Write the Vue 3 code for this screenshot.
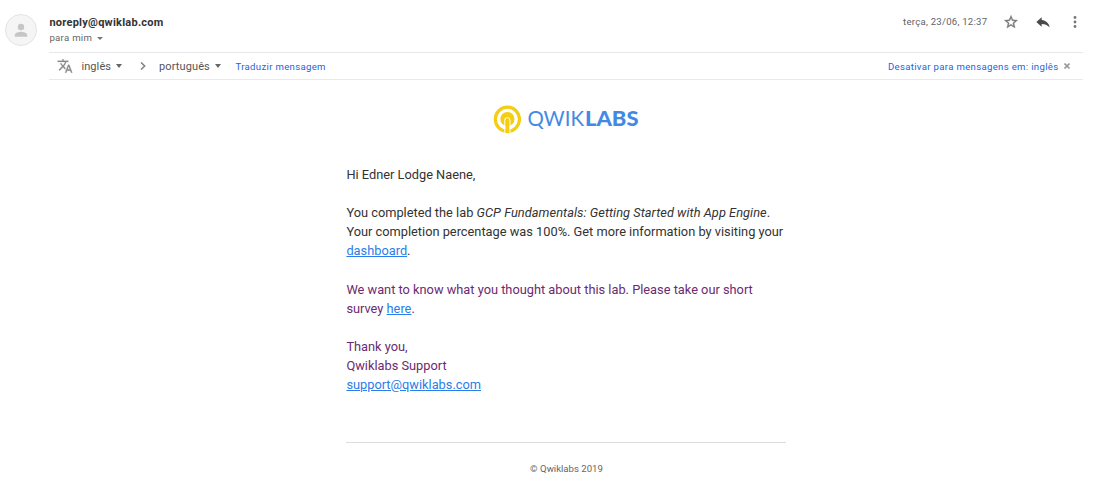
<script setup>
const sender = 'noreply@qwiklab.com'
</script>

<template>
  <main class="mail">
    <header class="head">
      <div class="avatar">
        <svg width="32" height="32" viewBox="0 0 32 32">
          <circle cx="16" cy="16" r="15.5" fill="#f5f5f5" stroke="#e3e3e3" />
          <circle cx="16" cy="13" r="3.2" fill="#c6c6c6" />
          <path d="M9.8 22.7v-1.6c0-2.2 4.1-3.3 6.2-3.3s6.2 1.1 6.2 3.3v1.6z" fill="#c6c6c6" />
        </svg>
      </div>
      <div class="who">
        <div class="sender">{{ sender }}</div>
        <div class="to"><span>para mim</span><i class="caret small"></i></div>
      </div>
      <div class="date">terça, 23/06, 12:37</div>
      <svg class="star" width="16" height="16" viewBox="0 0 24 24" fill="#757575" stroke="#757575" stroke-width=".5">
        <path d="M22 9.24l-7.19-.62L12 2 9.19 8.63 2 9.24l5.46 4.73L5.82 21 12 17.27 18.18 21l-1.63-7.03L22 9.24zM12 15.4l-3.76 2.27 1-4.28-3.32-2.88 4.38-.38L12 6.1l1.71 4.04 4.38.38-3.32 2.88 1 4.28L12 15.4z" />
      </svg>
      <svg class="reply" width="16" height="16" viewBox="0 0 24 24" fill="#4a4a4a">
        <path d="M10 9V5l-8 7 8 7v-4.1c5 0 8.5 1.6 12 5.1-1-5-4-10-12-11z" />
      </svg>
      <svg class="more" width="16" height="16" viewBox="0 0 16 16" fill="#777">
        <circle cx="8" cy="3.5" r="1.4" /><circle cx="8" cy="8" r="1.4" /><circle cx="8" cy="12.5" r="1.4" />
      </svg>
    </header>

    <section class="translate">
      <svg class="lang" width="16" height="16" viewBox="0 0 24 24" fill="#8a8a8a" stroke="#8a8a8a" stroke-width=".3">
        <path d="M12.87 15.07l-2.54-2.51.03-.03c1.74-1.94 2.98-4.17 3.71-6.53H17V4h-7V2H8v2H1v1.99h11.17C11.5 7.92 10.44 9.75 9 11.35 8.07 10.32 7.3 9.19 6.69 8h-2c.73 1.63 1.73 3.17 2.98 4.56l-5.09 5.02L4 19l5-5 3.11 3.11.76-2.04zM18.5 10h-2L12 22h2l1.12-3h4.75L21 22h2l-4.5-12zm-2.62 7l1.62-4.33L19.12 17h-3.24z" />
      </svg>
      <div class="from"><span>inglês</span><i class="caret"></i></div>
      <svg class="chevron" width="6" height="8" viewBox="0 0 6 8"><path d="M1 .5L4.7 4 1 7.5" fill="none" stroke="#808080" stroke-width="1.5" /></svg>
      <div class="into"><span>português</span><i class="caret"></i></div>
      <a class="action">Traduzir mensagem</a>
      <a class="off">Desativar para mensagens em: inglês</a>
      <svg class="close" width="6" height="6" viewBox="0 0 6 6"><path d="M.5.5l5 5M5.5.5l-5 5" stroke="#999" stroke-width="1.6" /></svg>
    </section>

    <article class="body">
      <div class="logo">
        <svg width="28" height="28" viewBox="0 0 28 28" fill="none">
          <circle cx="14.4" cy="14.3" r="12.1" stroke="#f5cd13" stroke-width="3.2" />
          <circle cx="14.4" cy="14.1" r="7.1" fill="#f5cd13" />
          <path d="M11.9 28.5V15.2a2.5 2.5 0 0 1 5 0V28.5" stroke="#fff" stroke-width="1.1" />
          <path d="M12.5 27.6V15.2a1.9 1.9 0 0 1 3.8 0V27.6z" fill="#f5cd13" />
        </svg>
        <svg class="word" width="114" height="24" viewBox="0 0 114 24">
          <text x="0.5" y="19" textLength="56.5" lengthAdjust="spacingAndGlyphs" class="thin">QWIK</text>
          <text x="58" y="19" textLength="53.5" lengthAdjust="spacingAndGlyphs" class="bold">LABS</text>
        </svg>
      </div>
      <div class="copy">
        <p>Hi Edner Lodge Naene,</p>
        <p>You completed the lab <em>GCP Fundamentals: Getting Started with App Engine</em>.<br />Your completion percentage was 100%. Get more information by visiting your<br /><a>dashboard</a>.</p>
        <p class="quoted">We want to know what you thought about this lab. Please take our short<br />survey <a>here</a>.</p>
        <p class="quoted">Thank you,<br />Qwiklabs Support<br /><a>support@qwiklabs.com</a></p>
      </div>
      <footer>© Qwiklabs 2019</footer>
    </article>
  </main>
</template>

<style>
body { background: #fff; }
</style>

<style scoped>
.mail { width: 1096px; height: 483px; overflow: hidden; box-sizing: border-box; font-family: Roboto, sans-serif; color: #333; }
.head { display: flex; height: 52px; }
.avatar { width: 32px; margin: 14px 12.4px 0 5px; }
.who { flex: 1; padding-top: 16px; }
.sender { font-size: 11px; line-height: 14px; font-weight: 700; letter-spacing: .25px; }
.to { display: flex; align-items: center; margin-top: 1px; font-size: 9.6px; line-height: 14px; color: #666; letter-spacing: .3px; }
.caret { width: 0; height: 0; margin-left: 5px; border: 3.5px solid transparent; border-top: 4px solid #666; border-bottom: 0; }
.small { border-width: 3.5px 3px 0; margin-left: 5px; border-top-color: #777; }
.date { margin-top: 15px; width: 100px; font-size: 9.6px; line-height: 14px; letter-spacing: .25px; color: #5f6368; white-space: nowrap; }
.star { margin-top: 14px; }
.reply { margin: 14px 0 0 16px; }
.more { margin: 14px 13px 0 16px; }
.translate { display: flex; align-items: center; box-sizing: border-box; width: 1034px; height: 28px; margin-left: 49px; border-top: 1px solid #e6e9eb; border-bottom: 1px solid #e9e9e9; color: #555; font-size: 11px; white-space: nowrap; }
.lang { margin-left: 8px; }
.from { display: flex; align-items: center; width: 58px; margin-left: 8.4px; letter-spacing: .1px; }
.chevron { margin-left: 1px; }
.into { display: flex; align-items: center; width: 76.4px; margin-left: 12.7px; letter-spacing: .1px; }
.action, .off { color: #2564dc; font-size: 9.6px; letter-spacing: .32px; }
.off { margin-left: auto; }
.close { margin: 0 13.5px 0 5px; }
.body { width: 440px; margin-left: 346px; }
.logo { display: flex; height: 28px; padding: 25px 0 0 147px; }
.word { margin: 2px 0 0 6px; overflow: visible; }
.word text { font-family: Lato, sans-serif; font-size: 21px; fill: #4389e3; }
.word .thin { font-weight: 400; }
.word .bold { font-weight: 900; }
.copy { height: 277px; padding-top: 32px; border-bottom: 1px solid #ddd; font-size: 12.8px; line-height: 19.1px; white-space: nowrap; }
.copy p { margin: 0 0 19.1px .4px; }
.copy em { letter-spacing: .045px; }
.quoted { color: #6b2b70; }
.copy a { color: #2b7de9; text-decoration: underline; }
footer { padding: 19px 0 0 1px; text-align: center; font-size: 9.6px; line-height: 14px; color: #666; }
</style>
